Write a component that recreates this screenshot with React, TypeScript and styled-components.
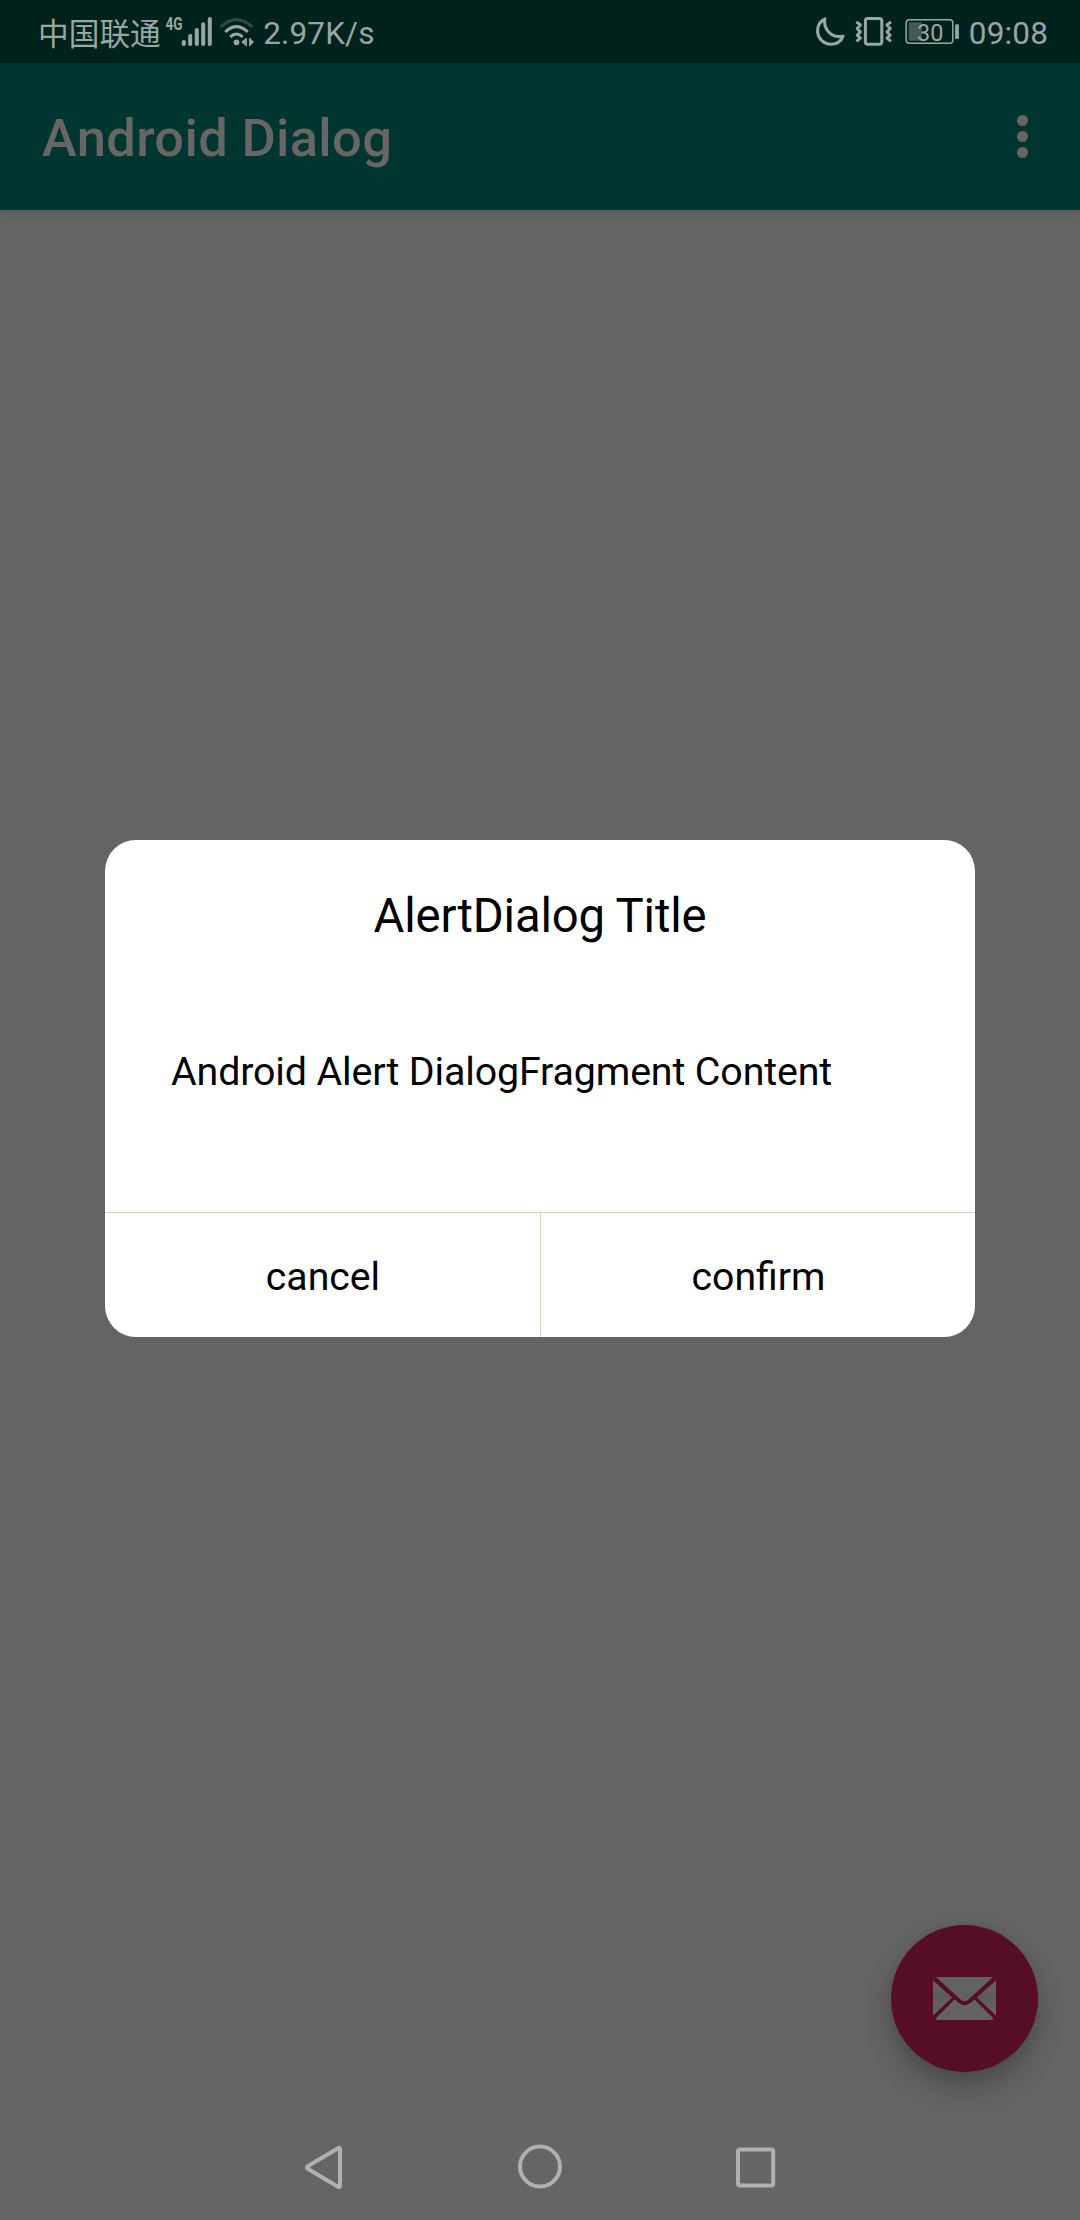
import React from "react";
import styled, { createGlobalStyle } from "styled-components";

const ink = "#99a7a4";

const GlobalStyle = createGlobalStyle`
  body { margin: 0; background: #646464; }
  * { box-sizing: border-box; }
`;

const Screen = styled.div`
  position: relative;
  width: 1080px;
  height: 2220px;
  display: flex;
  flex-direction: column;
  overflow: hidden;
  background: #646464;
  font-family: Roboto, "Noto Sans CJK SC", sans-serif;
`;

const StatusBar = styled.header`
  height: 63px;
  flex: none;
  display: flex;
  justify-content: space-between;
  padding: 0 32px 0 38px;
  background: #00221c;
  color: ${ink};
`;

const StatusGroup = styled.div`
  display: flex;
  align-items: flex-start;
  height: 63px;
`;

const StatusText = styled.span<{ $gap?: number }>`
  font-size: 31.5px;
  line-height: 37px;
  letter-spacing: 0.15px;
  margin-top: 15px;
  margin-left: ${(p) => p.$gap ?? 0}px;
  white-space: nowrap;
`;

const Carrier = styled.span`
  font-family: "Noto Sans CJK SC", sans-serif;
  font-weight: 400;
  font-size: 30.7px;
  line-height: 37px;
  margin-top: 13px;
  white-space: nowrap;
`;

const StatusIcon = styled.svg`
  flex: none;
  display: block;
`;

const Spacer = styled.span<{ $w: number }>`
  flex: none;
  width: ${(p) => p.$w}px;
`;

const AppBar = styled.div`
  height: 147px;
  flex: none;
  display: flex;
  align-items: center;
  justify-content: space-between;
  padding: 0 52px 0 42px;
  background: #003530;
  box-shadow: 0 3px 12px rgba(0, 0, 0, 0.12);
`;

const AppTitle = styled.h1`
  margin: 3px 0 0;
  font-size: 52.5px;
  line-height: 62px;
  font-weight: 500;
  letter-spacing: 0.32px;
  color: #666;
`;

const MoreButton = styled.button`
  display: flex;
  flex-direction: column;
  gap: 5px;
  padding: 0;
  border: 0;
  background: none;
`;

const Dot = styled.i`
  width: 11px;
  height: 11px;
  border-radius: 50%;
  background: #666;
`;

const Content = styled.main`
  flex: 1;
  display: flex;
  justify-content: flex-end;
  align-items: flex-end;
  padding: 0 42px 42px;
`;

const Fab = styled.button`
  width: 147px;
  height: 147px;
  padding: 0;
  border: 0;
  border-radius: 50%;
  background: #560d27;
  display: flex;
  align-items: center;
  justify-content: center;
  box-shadow: 0 15px 28px rgba(0, 0, 0, 0.24), 0 2px 12px rgba(0, 0, 0, 0.08);
`;

const NavBar = styled.nav`
  height: 106px;
  flex: none;
  display: flex;
  justify-content: center;
  background: #656565;
`;

const NavButton = styled.button`
  width: 216px;
  height: 106px;
  padding: 0;
  border: 0;
  background: none;
`;

const Overlay = styled.div`
  position: absolute;
  inset: 0;
  display: flex;
  justify-content: center;
  align-items: flex-start;
  padding-top: 840px;
`;

const Dialog = styled.section`
  width: 870px;
  height: 497px;
  display: flex;
  flex-direction: column;
  border-radius: 31px;
  overflow: hidden;
  background: #fff;
  color: #000;
`;

const DialogTitle = styled.h2`
  margin: 0;
  padding-top: 47px;
  height: 155px;
  font-size: 47.25px;
  line-height: 58px;
  font-weight: 400;
  letter-spacing: -0.16px;
  text-align: center;
`;

const DialogMessage = styled.p`
  margin: 0;
  flex: 1;
  padding: 53px 66px 0;
  font-size: 39.375px;
  line-height: 48px;
  letter-spacing: -0.13px;
`;

const Actions = styled.footer`
  height: 125px;
  display: grid;
  grid-template-columns: 435px 435px;
  border-top: 1px solid #e3cab5;
`;

const Action = styled.button<{ $divided?: boolean }>`
  padding: 4px 0 0 1px;
  border: 0;
  border-left: ${(p) => (p.$divided ? "1px solid #e3cab5" : "0")};
  background: none;
  color: #000;
  font: 400 39.2px/48px Roboto, sans-serif;
`;

const SignalIcon = () => (
  <StatusIcon width="50" height="63" viewBox="0 0 50 63" fill={ink}>
    <text x="1.5" y="30" fontSize="17.5" fontWeight="700" textLength="17" lengthAdjust="spacingAndGlyphs">4G</text>
    <rect x="17.7" y="40" width="4.2" height="6" rx="2" />
    <rect x="24.2" y="34" width="4" height="12" rx="2" />
    <rect x="30.8" y="28" width="4" height="18" rx="2" />
    <rect x="37.2" y="22.3" width="4" height="23.7" rx="2" />
    <rect x="43.8" y="17" width="4" height="29" rx="2" />
  </StatusIcon>
);

const WifiIcon = () => (
  <StatusIcon width="40" height="63" viewBox="0 0 40 63" fill="none" stroke={ink} strokeWidth="3">
    <path d="M1.6 27Q17.5 12.2 33.4 27" stroke="#2f4b46" />
    <path d="M6.2 32Q17.5 21.4 28.8 32" />
    <path d="M11.2 37Q17.5 31 23.8 37" />
    <circle cx="17.5" cy="42.3" r="2.9" fill={ink} stroke="none" />
    <path d="M22.4 42L26.6 38.2V45.8ZM35 42L31 38.2V45.8Z" fill={ink} stroke="none" />
    <path d="M27.2 38V46M30.9 38V46" strokeWidth="1.5" />
  </StatusIcon>
);

const MoonIcon = () => (
  <StatusIcon width="34" height="63" viewBox="0 0 34 63" fill="none" stroke={ink} strokeWidth="3.1" strokeLinejoin="round">
    <path d="M9.8 18.8C4.5 21.5 2.2 26.5 2.6 32C3.2 39 9 44.2 15.6 44.2C21.6 44.2 26.2 41 28 36.2C22.5 37.4 17 35.8 13.2 31.5C10 27.7 9 23.3 9.8 18.8Z" />
  </StatusIcon>
);

const VibrateIcon = () => (
  <StatusIcon width="50" height="63" viewBox="0 0 50 63" fill="none" stroke={ink} strokeWidth="3" strokeLinejoin="round">
    <rect x="15.4" y="18.6" width="16.4" height="25.6" rx="2.4" />
    <path d="M6.4 21.8L10.4 25L7.2 28.5L10.4 32L7.2 35.2L10.4 38.2L6.4 41.4M41 21.8L37 25L40.2 28.5L37 32L40.2 35.2L37 38.2L41 41.4" />
  </StatusIcon>
);

const BatteryIcon = () => (
  <StatusIcon width="56" height="63" viewBox="0 0 56 63">
    <rect x="1.2" y="19.8" width="46.6" height="23.4" rx="3" fill="none" stroke={ink} strokeWidth="1.5" />
    <rect x="3.8" y="22.3" width="13" height="18.4" fill="#425b56" />
    <text x="12" y="40.5" fontSize="24.5" textLength="26.4" lengthAdjust="spacingAndGlyphs" fill={ink}>30</text>
    <rect x="50.1" y="24.3" width="3.8" height="14.8" rx="1.2" fill={ink} />
  </StatusIcon>
);

const MailIcon = () => (
  <svg width="63" height="43" viewBox="0 0 63 43">
    <defs>
      <linearGradient id="paper" x1="0" y1="0" x2="0" y2="1">
        <stop offset="0" stopColor="#646464" />
        <stop offset="0.5" stopColor="#5c5c5c" />
        <stop offset="1" stopColor="#666" />
      </linearGradient>
    </defs>
    <path d="M3 0H60L35.5 22.5Q31.5 26 27.5 22.5Z" fill="#626262" />
    <path d="M0 3.5L19.2 20.4L0 38.5ZM63 3.5L43.8 20.4L63 38.5Z" fill="url(#paper)" />
    <path d="M21.5 22.5L26 26.3Q31.5 30 37 26.3L41.5 22.5L60.5 41.5L59 43H4L2.5 41.5Z" fill="#636363" />
  </svg>
);

export default function App() {
  return (
    <>
      <GlobalStyle />
      <Screen>
        <StatusBar>
          <StatusGroup>
            <Carrier>中国联通</Carrier>
            <Spacer $w={3} />
            <SignalIcon />
            <Spacer $w={5.7} />
            <WifiIcon />
            <StatusText $gap={3.7}>2.97K/s</StatusText>
          </StatusGroup>
          <StatusGroup>
            <MoonIcon />
            <Spacer $w={0.6} />
            <VibrateIcon />
            <Spacer $w={5.1} />
            <BatteryIcon />
            <StatusText $gap={7.7}>09:08</StatusText>
          </StatusGroup>
        </StatusBar>
        <AppBar>
          <AppTitle>Android Dialog</AppTitle>
          <MoreButton aria-label="More options">
            <Dot />
            <Dot />
            <Dot />
          </MoreButton>
        </AppBar>
        <Content>
          <Fab aria-label="Email">
            <MailIcon />
          </Fab>
        </Content>
        <NavBar>
          <NavButton aria-label="Back">
            <svg width="216" height="106" viewBox="0 0 216 106" fill="none" stroke="#b0b0b0" strokeWidth="4" strokeLinejoin="round">
              <path d="M124 35.3Q124 33 122 34.2L91.7 52.3Q90 53.5 91.7 54.7L122 72.7Q124 73.8 124 71.5Z" />
            </svg>
          </NavButton>
          <NavButton aria-label="Home">
            <svg width="216" height="106" viewBox="0 0 216 106" fill="none" stroke="#b0b0b0" strokeWidth="4">
              <circle cx="108" cy="52.5" r="20" />
            </svg>
          </NavButton>
          <NavButton aria-label="Recents">
            <svg width="216" height="106" viewBox="0 0 216 106" fill="none" stroke="#b0b0b0" strokeWidth="4">
              <rect x="90" y="35.5" width="35.2" height="36" rx="2" />
            </svg>
          </NavButton>
        </NavBar>
        <Overlay>
          <Dialog role="dialog">
            <DialogTitle>AlertDialog Title</DialogTitle>
            <DialogMessage>Android Alert DialogFragment Content</DialogMessage>
            <Actions>
              <Action>cancel</Action>
              <Action $divided>confirm</Action>
            </Actions>
          </Dialog>
        </Overlay>
      </Screen>
    </>
  );
}
